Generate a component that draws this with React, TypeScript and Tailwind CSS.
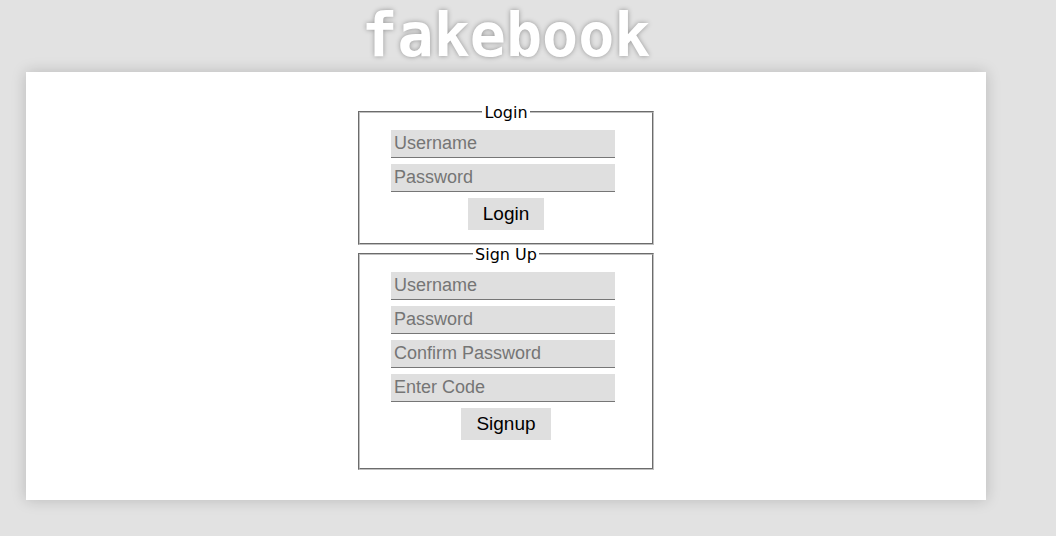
import type { FormEvent } from "react";

type Field = { label: string; name: string; type: "text" | "password" };

type FormPanelProps = {
  title: string;
  action: string;
  fields: Field[];
  className: string;
};

const loginFields: Field[] = [
  { label: "Username", name: "login-username", type: "text" },
  { label: "Password", name: "login-password", type: "password" },
];

const signupFields: Field[] = [
  { label: "Username", name: "signup-username", type: "text" },
  { label: "Password", name: "signup-password", type: "password" },
  { label: "Confirm Password", name: "signup-confirm", type: "password" },
  { label: "Enter Code", name: "signup-code", type: "text" },
];

function FormPanel({ title, action, fields, className }: FormPanelProps) {
  const handleSubmit = (event: FormEvent) => event.preventDefault();

  return (
    <form onSubmit={handleSubmit}>
      <fieldset
        className={`border-2 border-[#c0c0c0] px-[31px] pt-[9px] [border-style:groove] ${className}`}
      >
        <legend className="mx-auto px-[2px] pt-[2px] text-[16px] leading-[16px]">{title}</legend>
        <div className="flex flex-col gap-[6px]">
          {fields.map((field) => (
            <input
              key={field.name}
              name={field.name}
              type={field.type}
              placeholder={field.label}
              aria-label={field.label}
              className="h-[28px] w-[224px] border-b border-[#767676] bg-[#dfdfdf] px-[3px] font-['Liberation_Sans',Arial,sans-serif] text-[18px] leading-[24px] outline-none placeholder:text-[#757575] placeholder:opacity-100"
            />
          ))}
          <button
            type="submit"
            className="h-[32px] self-center bg-[#dfdfdf] px-[15px] font-['Liberation_Sans',Arial,sans-serif] text-[19px] leading-[32px]"
          >
            {action}
          </button>
        </div>
      </fieldset>
    </form>
  );
}

export default function App() {
  return (
    <div className="min-h-screen bg-[#e2e2e2] pr-[70px] pb-[36px] pl-[26px] font-['DejaVu_Sans',Verdana,sans-serif] text-black">
      <header className="h-[72px] text-center">
        <h1 className="font-['DejaVu_Sans_Mono',Consolas,monospace] text-[60px] leading-[70px] font-bold text-white [text-shadow:0_0_5px_rgba(0,0,0,0.35)]">
          fakebook
        </h1>
      </header>
      <main className="flex flex-col items-center bg-white pt-[31px] pb-[30px] shadow-[0_0_14px_rgba(0,0,0,0.18)]">
        <div className="w-[296px]">
          <FormPanel title="Login" action="Login" fields={loginFields} className="pb-[13px]" />
          <FormPanel title="Sign Up" action="Signup" fields={signupFields} className="pb-[28px]" />
        </div>
      </main>
    </div>
  );
}
